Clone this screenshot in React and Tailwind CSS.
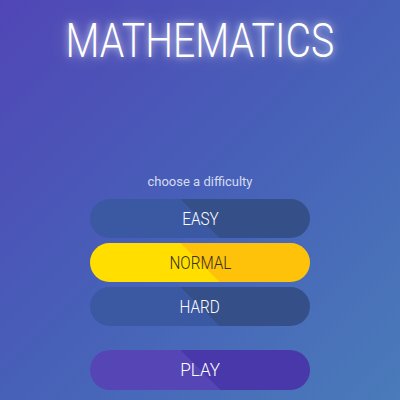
const DifficultyButton = ({ label, active }) => (
  <button
    type="button"
    className={
      active
        ? 'flex h-[39px] w-[220px] items-center justify-center rounded-full bg-[linear-gradient(45deg,#ffde00_50%,#ffc20a_50%)] text-[18px] font-light text-[#34301c]'
        : 'flex h-[39px] w-[220px] items-center justify-center rounded-full bg-[linear-gradient(45deg,#3b58a3_50%,#355089_50%)] text-[18px] font-light text-white'
    }
  >
    <span className="inline-block scale-x-[0.85]">{label}</span>
  </button>
);

const App = () => {
  return (
    <div className="flex h-[400px] w-[400px] flex-col items-center overflow-hidden bg-[linear-gradient(135deg,#5146b6_0%,#4760b8_50%,#4a7bba_100%)] font-['Roboto',sans-serif]">
      {/* 제목 */}
      <h1 className="mt-[13px] scale-x-[0.8] text-[49px] font-light leading-[56px] text-white [text-shadow:0_0_8px_rgba(255,255,255,0.7),0_0_22px_rgba(255,255,255,0.4)]">
        MATHEMATICS
      </h1>

      <p className="mt-[105px] text-[13px] leading-[16px] text-[#d5dcf1]">choose a difficulty</p>

      <div className="mt-[9px] flex flex-col gap-[5px]">
        <DifficultyButton label="EASY" />
        <DifficultyButton label="NORMAL" active />
        <DifficultyButton label="HARD" />
      </div>

      <button
        type="button"
        className="mt-[24px] flex h-[40px] w-[220px] items-center justify-center rounded-full bg-[linear-gradient(45deg,#5545b5_50%,#4938a9_50%)] text-[19px] font-light text-white"
      >
        <span className="inline-block scale-x-[0.9]">PLAY</span>
      </button>
    </div>
  );
};

export default App;
